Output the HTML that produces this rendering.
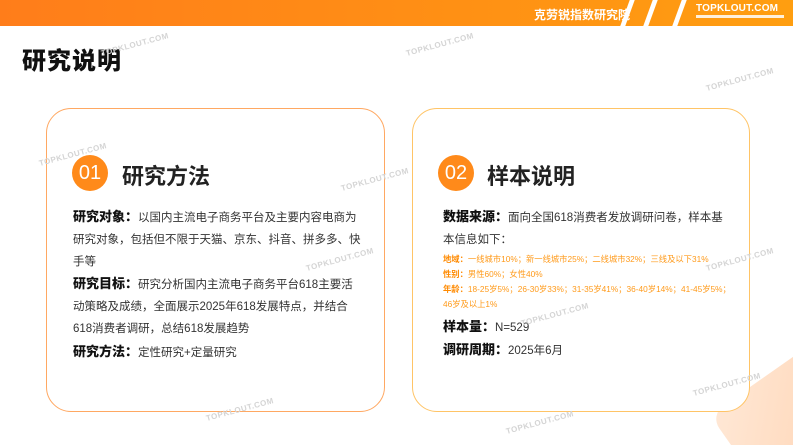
<!DOCTYPE html>
<html><head><meta charset="utf-8"><style>
*{margin:0;padding:0;box-sizing:border-box}
html,body{width:793px;height:446px;overflow:hidden}
body{background:#fff;position:relative;font-family:"Liberation Sans","Noto Sans CJK SC",sans-serif;color:#222}
.top{position:absolute;left:0;top:0;width:793px;height:26px;background:linear-gradient(90deg,#ff7d1a,#ff9e10)}
.top .t{position:absolute;left:534px;top:6px;color:#fff;font-size:12px;font-weight:bold}
.top .logo{position:absolute;left:696px;top:3px;color:#fff;font-size:10px;font-weight:bold;letter-spacing:.2px}
.top .sub{position:absolute;left:696px;top:15px;width:88px;height:3px;background:#fff;opacity:.85}
.stripe{position:absolute;top:0;width:5px;height:26px;background:#fff;transform:skewX(-20deg)}
h1{position:absolute;left:22px;top:41px;font-size:24px;font-weight:900;color:#111;letter-spacing:1px}
.card{position:absolute;top:108px;height:304px;border-radius:25px;background:#fff}
.c1{left:46px;width:339px;border:1.5px solid #ffa862}
.c2{left:412px;width:338px;border:1.5px solid #ffc466}
.num{position:absolute;width:36px;height:36px;border-radius:50%;background:#ff8a1a;color:#fff;font-size:20px;text-align:center;line-height:36px;top:155px}
.ttl{position:absolute;top:159px;font-size:22px;font-weight:bold;color:#222}
.txt{position:absolute;font-size:11.5px;line-height:21.8px;color:#333}
.txt b{color:#111;font-weight:900;font-size:13px}
.sm{font-size:8.3px;line-height:15px;color:#ff9a1a;white-space:nowrap}
.sm b{font-weight:bold;color:#ff8a00;font-size:8.3px}
.wm{position:absolute;color:#d4d4d4;font-size:8px;line-height:9px;font-weight:bold;transform:rotate(-15deg);letter-spacing:.5px}
</style></head><body>
<div class="top">
<div class="t">克劳锐指数研究院</div>
<div class="stripe" style="left:625px"></div><div class="stripe" style="left:648px"></div><div class="stripe" style="left:677px"></div>
<div class="logo">TOPKLOUT.COM</div><div class="sub"></div>
</div>
<h1>研究说明</h1>
<svg style="position:absolute;left:600px;top:300px;display:block" width="193" height="145" viewBox="0 0 193 145">
<defs><linearGradient id="g" x1="0" y1="0" x2="1" y2="1"><stop offset="0" stop-color="#ffe8d6"/><stop offset="1" stop-color="#ffc9a0"/></linearGradient></defs>
<rect x="0" y="0" width="160" height="160" rx="16" fill="url(#g)" transform="translate(110 115) rotate(-35)"/>
</svg>
<div class="card c1"></div>
<div class="card c2"></div>
<div class="num" style="left:72px">01</div>
<div class="ttl" style="left:122px">研究方法</div>
<div class="num" style="left:438px">02</div>
<div class="ttl" style="left:487px">样本说明</div>
<div class="txt" style="left:73px;top:206px;width:292px">
<b>研究对象：</b>以国内主流电子商务平台及主要内容电商为<br>研究对象，包括但不限于天猫、京东、抖音、拼多多、快<br>手等<br>
<b>研究目标：</b>研究分析国内主流电子商务平台618主要活<br>动策略及成绩，全面展示2025年618发展特点，并结合<br>618消费者调研，总结618发展趋势<br>
<b>研究方法：</b>定性研究+定量研究
</div>
<div class="txt" style="left:443px;top:206px;width:300px">
<b>数据来源：</b>面向全国618消费者发放调研问卷，样本基<br>本信息如下：
<div class="sm"><b>地域：</b>一线城市10%；新一线城市25%；二线城市32%；三线及以下31%<br><b>性别：</b>男性60%；女性40%<br><b>年龄：</b>18-25岁5%；26-30岁33%；31-35岁41%；36-40岁14%；41-45岁5%；<br>46岁及以上1%</div>
<div style="margin-top:4px"><b>样本量：</b>N=529</div>
<div><b>调研周期：</b>2025年6月</div>
</div>
<div class="wm" style="left:100px;top:40px">TOPKLOUT.COM</div>
<div class="wm" style="left:405px;top:40px">TOPKLOUT.COM</div>
<div class="wm" style="left:705px;top:75px">TOPKLOUT.COM</div>
<div class="wm" style="left:38px;top:150px">TOPKLOUT.COM</div>
<div class="wm" style="left:340px;top:175px">TOPKLOUT.COM</div>
<div class="wm" style="left:305px;top:255px">TOPKLOUT.COM</div>
<div class="wm" style="left:705px;top:255px">TOPKLOUT.COM</div>
<div class="wm" style="left:520px;top:310px">TOPKLOUT.COM</div>
<div class="wm" style="left:692px;top:380px">TOPKLOUT.COM</div>
<div class="wm" style="left:205px;top:405px">TOPKLOUT.COM</div>
<div class="wm" style="left:505px;top:418px">TOPKLOUT.COM</div>
</body></html>
